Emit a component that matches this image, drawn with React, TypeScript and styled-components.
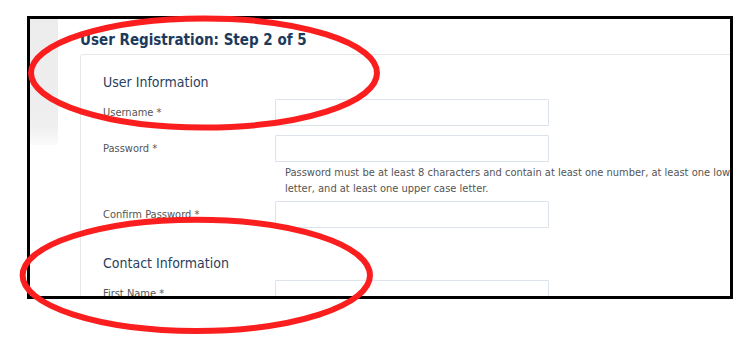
import React from "react";
import styled, { createGlobalStyle } from "styled-components";

const GlobalStyle = createGlobalStyle`
  html, body { margin: 0; padding: 0; background: #ffffff; }
  * { box-sizing: border-box; }
`;

const fontStack = `"DejaVu Sans Condensed", "DejaVu Sans", Verdana, sans-serif`;

const Page = styled.div`
  position: relative;
  width: 754px;
  height: 353px;
  padding: 16px 0 0 27px;
  overflow: hidden;
  font-family: ${fontStack};
  font-stretch: condensed;
`;

const Frame = styled.div`
  width: 706px;
  height: 283px;
  border: 3px solid #000000;
  overflow: hidden;
  display: flex;
  align-items: flex-start;
  background: #ffffff;
`;

const SideStrip = styled.div`
  flex: 0 0 28px;
  height: 126px;
  background: linear-gradient(180deg, #ececec 0%, #efefef 85%, #fbfbfb 100%);
`;

const Main = styled.main`
  flex: 0 0 auto;
  padding: 12px 0 0 22px;
`;

const Title = styled.h1`
  margin: 0 0 5px;
  font-size: 15px;
  line-height: 18px;
  font-weight: bold;
  color: #1d3a5c;
`;

const Panel = styled.section`
  width: 780px;
  min-height: 300px;
  border: 1px solid #e6e6e6;
  border-radius: 3px;
  padding: 19px 0 0 22px;
`;

const SectionHeading = styled.h2<{ $spaceTop?: number }>`
  margin: ${(p) => p.$spaceTop ?? 0}px 0 8px;
  font-size: 14px;
  line-height: 17px;
  font-weight: normal;
  color: #2a3f5e;
`;

const FormRow = styled.div`
  display: grid;
  grid-template-columns: 172px 1fr;
  align-items: start;
  margin-bottom: 9px;
`;

const Label = styled.label`
  font-size: 11px;
  line-height: 27px;
  color: #555555;
`;

const FieldCol = styled.div`
  display: flex;
  flex-direction: column;
`;

const TextInput = styled.input`
  width: 274px;
  height: 27px;
  margin: 0;
  padding: 0 6px;
  border: 1px solid #dde3ea;
  border-radius: 1px;
  background: #ffffff;
  font-family: ${fontStack};
  font-size: 11px;
  outline: none;
`;

const Help = styled.p`
  margin: 3px 0 -4px 10px;
  font-size: 11px;
  line-height: 15.5px;
  color: #555555;
  white-space: nowrap;
`;

const Overlay = styled.svg`
  position: absolute;
  left: 0;
  top: 0;
  pointer-events: none;
`;

type Field = { id: string; label: string; type?: string };

const Row: React.FC<{ field: Field; help?: React.ReactNode }> = ({ field, help }) => (
  <FormRow>
    <Label htmlFor={field.id}>{field.label}</Label>
    <FieldCol>
      <TextInput id={field.id} type={field.type ?? "text"} />
      {help && <Help>{help}</Help>}
    </FieldCol>
  </FormRow>
);

export default function App() {
  return (
    <>
      <GlobalStyle />
      <Page>
        <Frame>
          <SideStrip />
          <Main>
            <Title>User Registration: Step 2 of 5</Title>
            <Panel>
              <SectionHeading>User Information</SectionHeading>
              <Row field={{ id: "username", label: "Username *" }} />
              <Row
                field={{ id: "password", label: "Password *", type: "password" }}
                help={
                  <>
                    Password must be at least 8 characters and contain at least one number, at least one lower case
                    <br />
                    letter, and at least one upper case letter.
                  </>
                }
              />
              <Row field={{ id: "confirm", label: "Confirm Password *", type: "password" }} />
              <SectionHeading $spaceTop={27}>Contact Information</SectionHeading>
              <Row field={{ id: "firstname", label: "First Name *" }} />
            </Panel>
          </Main>
        </Frame>
        <Overlay width="754" height="353" viewBox="0 0 754 353">
          <ellipse cx="204" cy="73" rx="173" ry="54.5" fill="none" stroke="#fb1e1e" strokeWidth="6" />
          <ellipse cx="196.3" cy="275.3" rx="173.7" ry="55.6" fill="none" stroke="#fb1e1e" strokeWidth="6" />
        </Overlay>
      </Page>
    </>
  );
}
